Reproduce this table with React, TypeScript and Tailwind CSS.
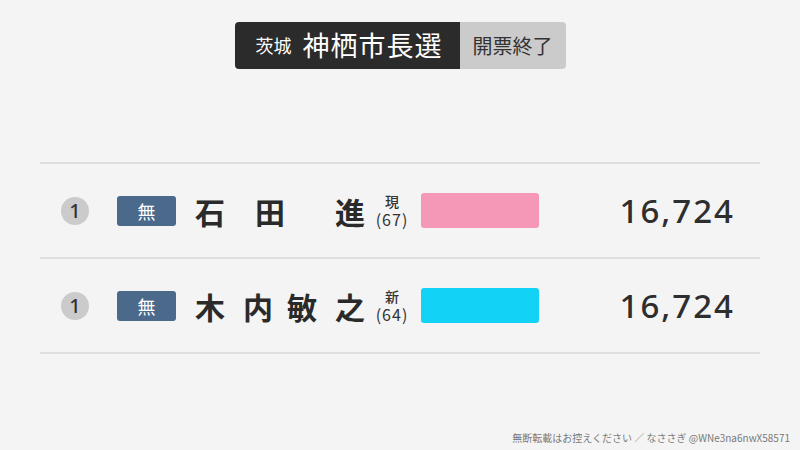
const FONT = { fontFamily: '"Noto Sans CJK JP", "Noto Sans", sans-serif' };
const LATIN = { fontFamily: '"Noto Sans", sans-serif' };

type Candidate = {
  name: { ch: string; ml: string }[];
  status: string;
  age: number;
  bar: string;
  votes: string;
};

const candidates: Candidate[] = [
  {
    name: [
      { ch: '石', ml: 'ml-0' },
      { ch: '田', ml: 'ml-[30px]' },
      { ch: '進', ml: 'ml-[50px]' },
    ],
    status: '現',
    age: 67,
    bar: 'bg-[#f598b8]',
    votes: '16,724',
  },
  {
    name: [
      { ch: '木', ml: 'ml-0' },
      { ch: '内', ml: 'ml-[18px]' },
      { ch: '敏', ml: 'ml-[14px]' },
      { ch: '之', ml: 'ml-[18px]' },
    ],
    status: '新',
    age: 64,
    bar: 'bg-[#12d2f5]',
    votes: '16,724',
  },
];

function Row({ c }: { c: Candidate }) {
  return (
    <div className="flex items-center h-[95px] border-b-2 border-[#dedede]">
      <div
        className="flex items-center justify-center w-[28px] h-[28px] ml-[21px] rounded-full bg-[#cbcbcb] text-[#333] text-[20px] font-medium leading-none"
        style={LATIN}
      >
        1
      </div>
      <div className="flex items-center justify-center w-[59px] h-[30px] ml-[28px] rounded-[3px] bg-[#4b6a8b] text-white text-[18px] leading-none">
        無
      </div>
      <div className="flex items-center ml-[19px] w-[172px] text-[#2a2a2a] text-[30px] font-bold leading-none">
        {c.name.map((n, i) => (
          <span key={i} className={`w-[30px] text-center ${n.ml}`}>
            {n.ch}
          </span>
        ))}
      </div>
      <div className="flex flex-col items-center gap-[3px] w-[40px] ml-[5px] text-[#333]">
        <span className="text-[14px] font-medium leading-[14px]">{c.status}</span>
        <span className="text-[16px] tracking-[1px] leading-[17px]">({c.age})</span>
      </div>
      <div className={`w-[118px] h-[35px] ml-[9px] rounded-[3px] ${c.bar}`} />
      <div
        className="flex-1 text-right pr-[25px] text-[33px] font-medium text-[#2e2e2e] tracking-[2px] leading-none"
        style={LATIN}
      >
        {c.votes}
      </div>
    </div>
  );
}

export default function App() {
  return (
    <div className="relative w-[800px] h-[450px] bg-[#f4f4f4] overflow-hidden" style={FONT}>
      <div className="flex justify-center pt-[22px]">
        <div className="flex h-[47px] rounded-[4px] overflow-hidden">
          <div className="flex items-center bg-[#2b2b2b] text-white pl-[21px] pr-[17px]">
            <span className="text-[18px]">茨城</span>
            <span className="text-[27px] ml-[11px] tracking-[1px]">神栖市長選</span>
          </div>
          <div className="flex items-center bg-[#cbcbcb] text-[#333] px-[13px]">
            <span className="text-[20px]">開票終了</span>
          </div>
        </div>
      </div>

      <div className="mx-[40px] mt-[93px] border-t-2 border-[#dedede]">
        {candidates.map((c, i) => (
          <Row key={i} c={c} />
        ))}
      </div>

      <div className="absolute right-[10px] bottom-[5px] text-[10px] text-[#7a7a7a]">
        無断転載はお控えください ／ なささぎ @WNe3na6nwX58571
      </div>
    </div>
  );
}
